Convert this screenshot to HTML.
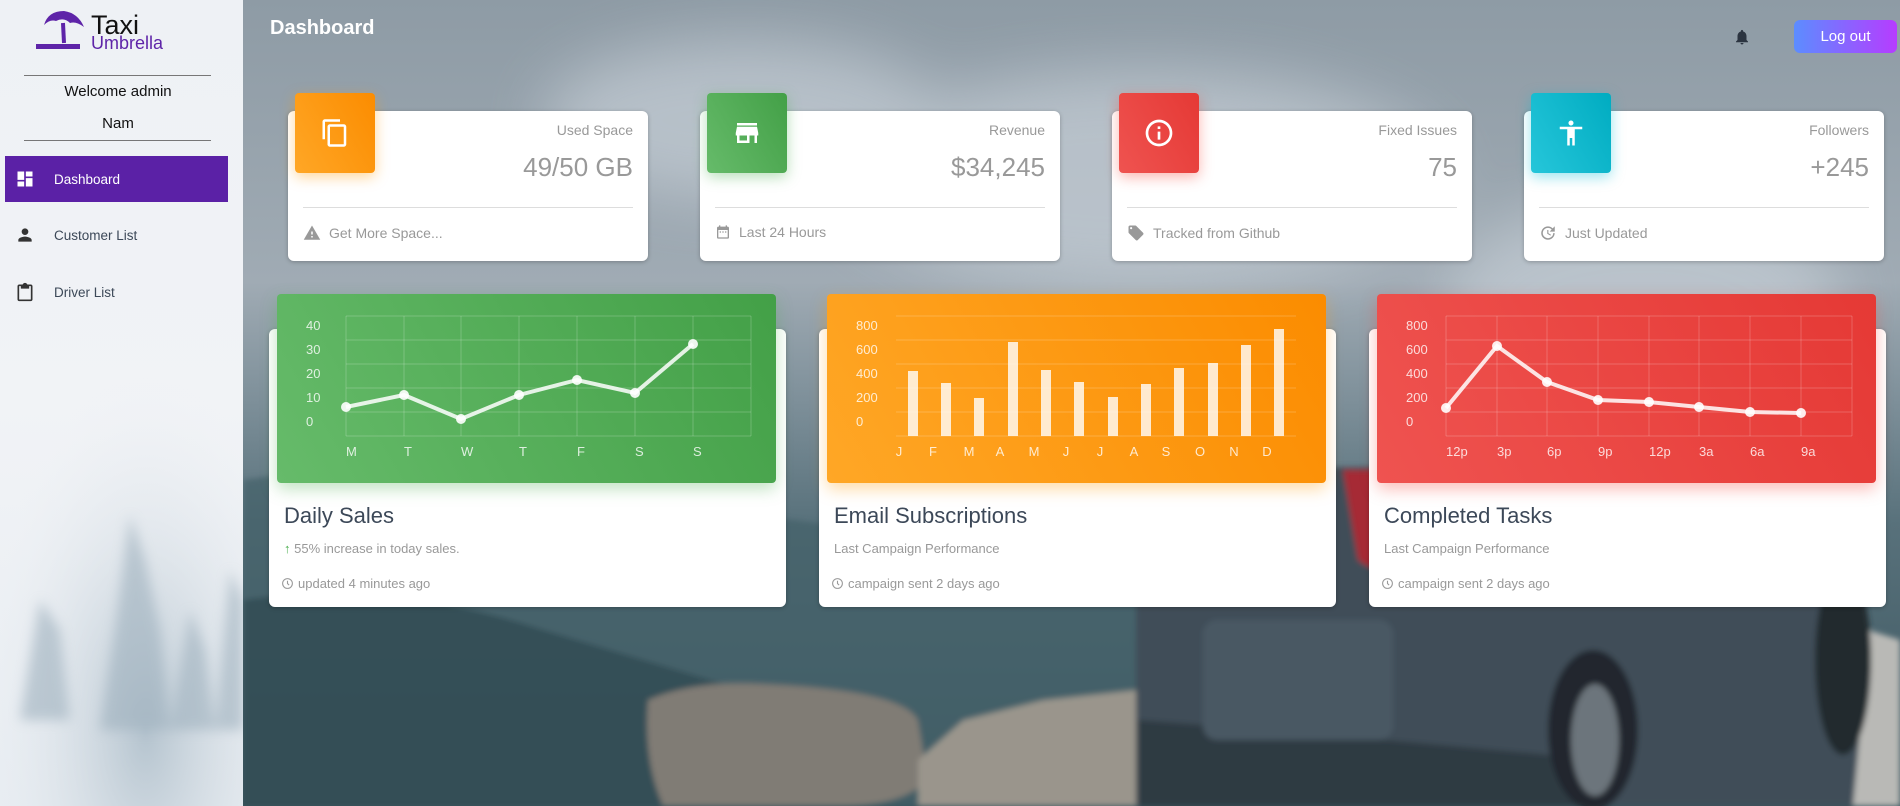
<!DOCTYPE html>
<html><head><meta charset="utf-8"><style>
*{margin:0;padding:0;box-sizing:border-box}
body{width:1900px;height:806px;overflow:hidden;font-family:"Liberation Sans",sans-serif;position:relative;background:#8d9ba5}
.abs{position:absolute}
#bg{position:absolute;left:243px;top:0}
#side{position:absolute;left:0;top:0;width:243px;height:806px;background:linear-gradient(180deg,#eef1f5 0%,#f1f3f6 50%,#e8edf2 100%);overflow:hidden}
.card{position:absolute;background:#fff;border-radius:6px;box-shadow:0 1px 4px rgba(0,0,0,.25)}
.ibox{position:absolute;left:7px;top:-18px;width:80px;height:80px;border-radius:4px;display:flex;align-items:center;justify-content:center}
.st{position:absolute;right:15px;top:11px;font-size:14px;color:#999}
.sv{position:absolute;right:15px;top:41px;font-size:26px;color:#999}
.sd{position:absolute;left:15px;right:15px;top:96px;border-top:1px solid #ddd}
.sf{position:absolute;left:15px;top:113px;font-size:14px;color:#999;display:flex;align-items:center;gap:8px}
.ch{position:absolute;left:8px;top:-35px;width:499px;height:189px;border-radius:4px}
.ct{position:absolute;left:15px;top:174px;font-size:22px;color:#3c4858}
.cs{position:absolute;left:15px;top:212px;font-size:13px;color:#999}
.cf{position:absolute;left:12px;top:247px;font-size:13px;color:#999;display:flex;align-items:center;gap:4px}
.nav{position:absolute;left:5px;width:223px;height:46px;display:flex;align-items:center;font-size:13.5px;color:#3c4858}
.nav svg{position:absolute;left:10px}
.nav span{position:absolute;left:49px}
</style></head><body>
<svg id="bg" width="1657" height="806" viewBox="0 0 1657 806">
<defs>
<linearGradient id="sky" x1="0" y1="0" x2="0" y2="1"><stop offset="0" stop-color="#8e9ba5"/><stop offset=".35" stop-color="#a0abb4"/><stop offset=".5" stop-color="#7d8f99"/><stop offset=".65" stop-color="#58717b"/><stop offset="1" stop-color="#3a545d"/></linearGradient>
<filter id="b1" x="-20%" y="-20%" width="140%" height="140%"><feGaussianBlur stdDeviation="30"/></filter>
<filter id="b2"><feGaussianBlur stdDeviation="3"/></filter>
</defs>
<rect width="1657" height="806" fill="url(#sky)"/>
<g filter="url(#b1)" fill="#c5cdd5" opacity=".7">
<ellipse cx="900" cy="180" rx="300" ry="110"/><ellipse cx="500" cy="120" rx="200" ry="80"/><ellipse cx="1400" cy="300" rx="200" ry="100"/></g>
<g filter="url(#b2)">
<path d="M0 480 Q200 450 400 500 L700 540 L900 520 L900 806 L0 806Z" fill="#45606a" opacity=".7"/>
<path d="M0 600 Q150 580 300 630 L500 690 L500 806 L0 806Z" fill="#314a52" opacity=".8"/>
<path d="M405 700 Q450 680 520 684 Q660 690 675 720 L685 780 Q660 806 600 806 L420 806 Q400 760 405 700Z" fill="#807b74"/>
<path d="M675 760 L720 720 L800 700 L893 690 L893 806 L675 806Z" fill="#9a958c"/>
<path d="M1560 610 L1657 640 L1657 806 L1560 806Z" fill="#b9b9b6"/>
<path d="M893 560 Q898 480 950 470 L1500 460 Q1560 470 1590 560 L1620 700 L1610 806 L893 806Z" fill="#3f4d58"/>
<path d="M895 720 Q1100 735 1360 760 L1360 806 L895 806Z" fill="#2f3a43"/>
<rect x="960" y="620" width="190" height="120" rx="14" fill="#495864"/>
<path d="M1100 470 L1190 470 L1180 560 Q1140 580 1115 560Z" fill="#b8262e" opacity=".85"/>
<ellipse cx="1350" cy="730" rx="45" ry="80" fill="#20272d"/>
<ellipse cx="1352" cy="740" rx="24" ry="56" fill="#6c747b"/>
<ellipse cx="1600" cy="660" rx="28" ry="95" fill="#22292f"/>
</g>
</svg>

<div id="side">
<svg class="abs" style="left:0;top:300px" width="243" height="506"><defs><radialGradient id="fog" cx=".6" cy=".85" r=".7"><stop offset="0" stop-color="#b4c3ce"/><stop offset="1" stop-color="#eef1f5" stop-opacity="0"/></radialGradient><filter id="sb"><feGaussianBlur stdDeviation="6"/></filter></defs><rect width="243" height="506" fill="url(#fog)"/>
<g filter="url(#sb)" fill="#9fb1be" opacity=".6"><path d="M130 215 L145 260 L160 330 L170 430 L100 430 L115 330Z"/><path d="M190 310 L205 350 L215 430 L170 430Z"/><path d="M230 270 L243 300 L243 430 L215 430Z"/><path d="M40 300 L60 330 L70 420 L20 420Z"/></g></svg>
<svg class="abs" style="left:34px;top:9px" width="54" height="42" viewBox="0 0 54 42"><path d="M10 16 Q14 2 30 2 Q44 4 50 18 Q42 12 36 14 Q30 8 22 12 Q16 10 10 16Z" fill="#5e24a8"/><path d="M29 14 L30 34" stroke="#5e24a8" stroke-width="4"/><rect x="2" y="35" width="44" height="5" fill="#5e24a8"/></svg>
<div class="abs" style="left:91px;top:10px;font-size:27px;color:#111;line-height:30px">Taxi</div>
<div class="abs" style="left:91px;top:33px;font-size:18px;color:#5e24a8;line-height:20px">Umbrella</div>
<div class="abs" style="left:24px;top:75px;width:187px;border-top:1px solid #777"></div>
<div class="abs" style="left:0;top:83px;width:236px;text-align:center;font-size:15px;color:#111">Welcome admin</div>
<div class="abs" style="left:0;top:115px;width:236px;text-align:center;font-size:15px;color:#111">Nam</div>
<div class="abs" style="left:24px;top:140px;width:187px;border-top:1px solid #777"></div>
<div class="nav" style="top:156px;background:#5b21a6;color:#fff"><svg width="20" height="20" viewBox="0 0 24 24"><path d="M3 13h8V3H3zm0 8h8v-6H3zm10 0h8V11h-8zm0-18v6h8V3z" fill="#fff"/></svg><span>Dashboard</span></div>
<div class="nav" style="top:212px"><svg width="20" height="20" viewBox="0 0 24 24"><path d="M12 12c2.2 0 4-1.8 4-4s-1.8-4-4-4-4 1.8-4 4 1.8 4 4 4zm0 2c-2.7 0-8 1.3-8 4v2h16v-2c0-2.7-5.3-4-8-4z" fill="#333"/></svg><span>Customer List</span></div>
<div class="nav" style="top:269px"><svg width="20" height="24" viewBox="0 0 24 24"><path d="M19 3h-4.2C14.4 1.8 13.3 1 12 1s-2.4.8-2.8 2H5c-1.1 0-2 .9-2 2v16c0 1.1.9 2 2 2h14c1.1 0 2-.9 2-2V5c0-1.1-.9-2-2-2zm0 18H5V5h2v3h10V5h2z" fill="#333"/></svg><span>Driver List</span></div>
</div>

<div class="abs" style="left:270px;top:17px;font-size:20px;font-weight:bold;color:#fff">Dashboard</div>
<svg class="abs" style="left:1733px;top:27px" width="18" height="20" viewBox="0 0 24 24"><path d="M12 22c1.1 0 2-.9 2-2h-4c0 1.1.9 2 2 2zm6-6v-5c0-3.1-1.6-5.6-4.5-6.3V4c0-.8-.7-1.5-1.5-1.5s-1.5.7-1.5 1.5v.7C7.6 5.4 6 7.9 6 11v5l-2 2v1h16v-1z" fill="#2b3440"/></svg>
<div class="abs" style="left:1794px;top:20px;width:103px;height:33px;border-radius:6px;background:linear-gradient(90deg,#5c8dff,#b63cff);color:#fff;font-size:15px;display:flex;align-items:center;justify-content:center">Log out</div>

<div class="card" style="left:288px;top:111px;width:360px;height:150px">
<div class="ibox" style="background:linear-gradient(60deg,#ffa726,#fb8c00);box-shadow:0 4px 14px rgba(255,152,0,.4)"><svg width="30" height="30" viewBox="0 0 24 24"><path d="M16 1H4c-1.1 0-2 .9-2 2v14h2V3h12zm3 4H8c-1.1 0-2 .9-2 2v14c0 1.1.9 2 2 2h11c1.1 0 2-.9 2-2V7c0-1.1-.9-2-2-2zm0 16H8V7h11z" fill="#fff"/></svg></div>
<div class="st">Used Space</div><div class="sv">49/50 GB</div><div class="sd"></div>
<div class="sf"><svg width="18" height="18" viewBox="0 0 24 24"><path d="M1 21h22L12 2zm12-3h-2v-2h2zm0-4h-2v-4h2z" fill="#999"/></svg>Get More Space...</div></div>

<div class="card" style="left:700px;top:111px;width:360px;height:150px">
<div class="ibox" style="background:linear-gradient(60deg,#66bb6a,#43a047);box-shadow:0 4px 14px rgba(76,175,80,.4)"><svg width="30" height="30" viewBox="0 0 24 24"><path d="M20 4H4v2h16zm1 10v-2l-1-5H4l-1 5v2h1v6h10v-6h4v6h2v-6zm-9 4H6v-4h6z" fill="#fff"/></svg></div>
<div class="st">Revenue</div><div class="sv">$34,245</div><div class="sd"></div>
<div class="sf"><svg width="16" height="16" viewBox="0 0 24 24"><path d="M9 11H7v2h2zm4 0h-2v2h2zm4 0h-2v2h2zm2-7h-1V2h-2v2H8V2H6v2H5c-1.1 0-2 .9-2 2v14c0 1.1.9 2 2 2h14c1.1 0 2-.9 2-2V6c0-1.1-.9-2-2-2zm0 16H5V9h14z" fill="#999"/></svg>Last 24 Hours</div></div>

<div class="card" style="left:1112px;top:111px;width:360px;height:150px">
<div class="ibox" style="background:linear-gradient(60deg,#ef5350,#e53935);box-shadow:0 4px 14px rgba(244,67,54,.4)"><svg width="32" height="32" viewBox="0 0 24 24"><path d="M11 7h2v2h-2zm0 4h2v6h-2zm1-9C6.5 2 2 6.5 2 12s4.5 10 10 10 10-4.5 10-10S17.5 2 12 2zm0 18c-4.4 0-8-3.6-8-8s3.6-8 8-8 8 3.6 8 8-3.6 8-8 8z" fill="#fff"/></svg></div>
<div class="st">Fixed Issues</div><div class="sv">75</div><div class="sd"></div>
<div class="sf"><svg width="18" height="18" viewBox="0 0 24 24"><path d="M21.4 11.6l-9-9C12.1 2.2 11.6 2 11 2H4c-1.1 0-2 .9-2 2v7c0 .6.2 1.1.6 1.4l9 9c.4.4.9.6 1.4.6s1.1-.2 1.4-.6l7-7c.4-.4.6-.9.6-1.4s-.2-1.1-.6-1.4zM5.5 7C4.7 7 4 6.3 4 5.5S4.7 4 5.5 4 7 4.7 7 5.5 6.3 7 5.5 7z" fill="#999"/></svg>Tracked from Github</div></div>

<div class="card" style="left:1524px;top:111px;width:360px;height:150px">
<div class="ibox" style="background:linear-gradient(60deg,#26c6da,#00acc1);box-shadow:0 4px 14px rgba(0,188,212,.4)"><svg width="30" height="30" viewBox="0 0 24 24"><path d="M12 2c1.1 0 2 .9 2 2s-.9 2-2 2-2-.9-2-2 .9-2 2-2zm9 7h-6v13h-2v-6h-2v6H9V9H3V7h18z" fill="#fff"/></svg></div>
<div class="st">Followers</div><div class="sv">+245</div><div class="sd"></div>
<div class="sf"><svg width="18" height="18" viewBox="0 0 24 24"><path d="M21 10.1h-6.8l2.7-2.8c-2.7-2.7-7.1-2.8-9.8-.1-2.7 2.7-2.7 7 0 9.7 2.7 2.7 7.1 2.7 9.8 0 1.4-1.3 2-2.9 2-4.8h2c0 2-.9 4.6-2.6 6.3-3.5 3.5-9.2 3.500-12.7 0-3.5-3.5-3.5-9.1 0-12.6 3.5-3.5 9.1-3.5 12.6 0L21 3zM12.5 8v4.2l3.5 2.1-.7 1.2L11 13V8z" fill="#999"/></svg>Just Updated</div></div>

<div class="card" style="left:269px;top:329px;width:517px;height:278px">
<div class="ch" style="background:linear-gradient(60deg,#66bb6a,#43a047);box-shadow:0 6px 16px rgba(76,175,80,.35)">
<svg width="499" height="189" font-family="Liberation Sans" font-size="13" fill="rgba(255,255,255,.8)">
<g stroke="rgba(255,255,255,.2)" stroke-width="1"><path d="M69 22H474M69 46H474M69 70H474M69 94H474M69 118H474M69 142H474"/><path d="M69 22V142M127 22V142M184 22V142M242 22V142M300 22V142M358 22V142M416 22V142M474 22V142"/></g>
<text x="29" y="36">40</text><text x="29" y="60">30</text><text x="29" y="84">20</text><text x="29" y="108">10</text><text x="29" y="132">0</text>
<text x="69" y="162">M</text><text x="127" y="162">T</text><text x="184" y="162">W</text><text x="242" y="162">T</text><text x="300" y="162">F</text><text x="358" y="162">S</text><text x="416" y="162">S</text>
<polyline points="69,113 127,101 184,125 242,101 300,86 358,99 416,50" fill="none" stroke="rgba(255,255,255,.85)" stroke-width="4"/>
<g fill="rgba(255,255,255,.9)"><circle cx="69" cy="113" r="5"/><circle cx="127" cy="101" r="5"/><circle cx="184" cy="125" r="5"/><circle cx="242" cy="101" r="5"/><circle cx="300" cy="86" r="5"/><circle cx="358" cy="99" r="5"/><circle cx="416" cy="50" r="5"/></g>
</svg></div>
<div class="ct">Daily Sales</div>
<div class="cs"><span style="color:#4caf50;font-weight:bold">&#8593;</span> 55% increase in today sales.</div>
<div class="cf"><svg width="13" height="13" viewBox="0 0 24 24"><circle cx="12" cy="12" r="9" fill="none" stroke="#999" stroke-width="2"/><path d="M12 7v5l3 3" fill="none" stroke="#999" stroke-width="2"/></svg> updated 4 minutes ago</div>
</div>

<div class="card" style="left:819px;top:329px;width:517px;height:278px">
<div class="ch" style="background:linear-gradient(60deg,#ffa726,#fb8c00);box-shadow:0 6px 16px rgba(255,152,0,.35)">
<svg width="499" height="189" font-family="Liberation Sans" font-size="13" fill="rgba(255,255,255,.8)">
<g stroke="rgba(255,255,255,.2)" stroke-width="1"><path d="M69 22H469M69 46H469M69 70H469M69 94H469M69 118H469M69 142H469"/></g>
<text x="29" y="36">800</text><text x="29" y="60">600</text><text x="29" y="84">400</text><text x="29" y="108">200</text><text x="29" y="132">0</text>
<g fill="rgba(255,255,255,.8)">
<rect x="81" y="77" width="10" height="65"/><rect x="114" y="89" width="10" height="53"/><rect x="147" y="104" width="10" height="38"/><rect x="181" y="48" width="10" height="94"/><rect x="214" y="76" width="10" height="66"/><rect x="247" y="88" width="10" height="54"/><rect x="281" y="103" width="10" height="39"/><rect x="314" y="90" width="10" height="52"/><rect x="347" y="74" width="10" height="68"/><rect x="381" y="69" width="10" height="73"/><rect x="414" y="51" width="10" height="91"/><rect x="447" y="35" width="10" height="107"/></g>
<g text-anchor="middle"><text x="72" y="162">J</text><text x="106" y="162">F</text><text x="142" y="162">M</text><text x="173" y="162">A</text><text x="207" y="162">M</text><text x="239" y="162">J</text><text x="273" y="162">J</text><text x="307" y="162">A</text><text x="339" y="162">S</text><text x="373" y="162">O</text><text x="407" y="162">N</text><text x="440" y="162">D</text></g>
</svg></div>
<div class="ct">Email Subscriptions</div>
<div class="cs">Last Campaign Performance</div>
<div class="cf"><svg width="13" height="13" viewBox="0 0 24 24"><circle cx="12" cy="12" r="9" fill="none" stroke="#999" stroke-width="2"/><path d="M12 7v5l3 3" fill="none" stroke="#999" stroke-width="2"/></svg> campaign sent 2 days ago</div>
</div>

<div class="card" style="left:1369px;top:329px;width:517px;height:278px">
<div class="ch" style="background:linear-gradient(60deg,#ef5350,#e53935);box-shadow:0 6px 16px rgba(244,67,54,.35)">
<svg width="499" height="189" font-family="Liberation Sans" font-size="13" fill="rgba(255,255,255,.8)">
<g stroke="rgba(255,255,255,.2)" stroke-width="1"><path d="M69 22H475M69 46H475M69 70H475M69 94H475M69 118H475M69 142H475"/><path d="M69 22V142M120 22V142M170 22V142M221 22V142M272 22V142M322 22V142M373 22V142M424 22V142M475 22V142"/></g>
<text x="29" y="36">800</text><text x="29" y="60">600</text><text x="29" y="84">400</text><text x="29" y="108">200</text><text x="29" y="132">0</text>
<text x="69" y="162">12p</text><text x="120" y="162">3p</text><text x="170" y="162">6p</text><text x="221" y="162">9p</text><text x="272" y="162">12p</text><text x="322" y="162">3a</text><text x="373" y="162">6a</text><text x="424" y="162">9a</text>
<polyline points="69,114 120,52 170,88 221,106 272,108 322,113 373,118 424,119" fill="none" stroke="rgba(255,255,255,.85)" stroke-width="4"/>
<g fill="rgba(255,255,255,.9)"><circle cx="69" cy="114" r="5"/><circle cx="120" cy="52" r="5"/><circle cx="170" cy="88" r="5"/><circle cx="221" cy="106" r="5"/><circle cx="272" cy="108" r="5"/><circle cx="322" cy="113" r="5"/><circle cx="373" cy="118" r="5"/><circle cx="424" cy="119" r="5"/></g>
</svg></div>
<div class="ct">Completed Tasks</div>
<div class="cs">Last Campaign Performance</div>
<div class="cf"><svg width="13" height="13" viewBox="0 0 24 24"><circle cx="12" cy="12" r="9" fill="none" stroke="#999" stroke-width="2"/><path d="M12 7v5l3 3" fill="none" stroke="#999" stroke-width="2"/></svg> campaign sent 2 days ago</div>
</div>
</body></html>
